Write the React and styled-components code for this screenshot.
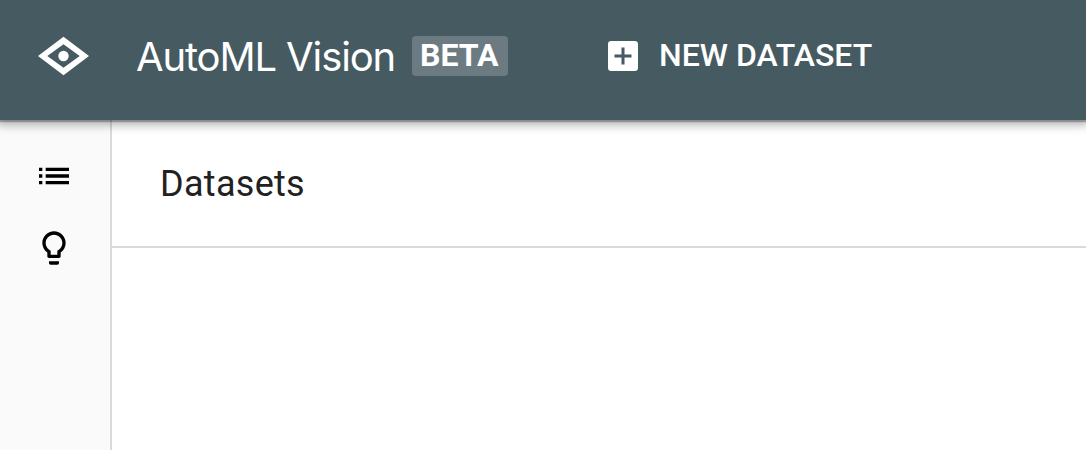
import React from 'react';
import styled, { createGlobalStyle } from 'styled-components';

const Global = createGlobalStyle`
  * { box-sizing: border-box; }
  body { margin: 0; background: #fff; font-family: Roboto, sans-serif; overflow: hidden; -webkit-font-smoothing: antialiased; }
`;
const Page = styled.div`
  height: 450px;
  display: flex;
  flex-direction: column;
`;
const Header = styled.header`
  height: 120px;
  flex: none;
  display: flex;
  align-items: flex-start;
  padding: 36px 0 0 38px;
  background: #465a62;
  color: #fff;
  box-shadow: 0 1px 1px 1px rgba(0, 0, 0, 0.26), 0 2px 9px 3px rgba(0, 0, 0, 0.3);
  position: relative;
  white-space: nowrap;
`;
const Logo = styled.svg`
  width: 51px;
  height: 40px;
  flex: none;
  margin-right: 47px;
`;
const Title = styled.h1`
  margin: 0;
  width: 276px;
  font: 400 40px/42px Inter, sans-serif;
  letter-spacing: -1.12px;
`;
const Badge = styled.span`
  width: 96px;
  height: 40px;
  padding-left: 8px;
  border-radius: 4px;
  background: #6b7b81;
  font: 700 32px/38px Roboto, sans-serif;
`;
const NewButton = styled.button`
  display: flex;
  align-items: center;
  gap: 21px;
  height: 40px;
  margin-left: 100px;
  padding: 0;
  border: 0;
  background: none;
  color: inherit;
  font: 500 32px/38px Roboto, sans-serif;
`;
const ButtonLabel = styled.span`
  padding-bottom: 2px;
`;
const Body = styled.div`
  flex: 1;
  display: flex;
`;
const Sidebar = styled.nav`
  width: 112px;
  border-right: 2px solid #dadada;
  background: #fafafa;
  display: flex;
  flex-direction: column;
  padding: 36px 0 0 34px;
  gap: 32px;
`;
const NavIcon = styled.svg`
  width: 40px;
  height: 40px;
  fill: #000;
`;
const Main = styled.main`
  flex: 1;
`;
const SectionHeader = styled.div`
  height: 128px;
  border-bottom: 2px solid #dadada;
  padding: 43px 0 0 48px;
`;
const Heading = styled.h2`
  margin: 0;
  color: #212121;
  font: 400 36px/42px Roboto, sans-serif;
  letter-spacing: 0.3px;
`;

export default function App() {
  return (
    <Page>
      <Global />
      <Header>
        <Logo viewBox="0 0 51 40" fill="#fff">
          <path fillRule="evenodd" d="M0 20 25.5.7 51 20 25.5 39.3ZM9.3 20 25.5 31.7 41.7 20 25.5 8.3Z" />
          <circle cx="25.5" cy="20" r="5.2" />
        </Logo>
        <Title>AutoML Vision</Title>
        <Badge>BETA</Badge>
        <NewButton>
          <svg width="30" height="30" viewBox="0 0 30 30">
            <rect width="30" height="30" rx="3.3" fill="#fff" />
            <path d="M15 6.5v17M6.5 15h17" stroke="#465a62" strokeWidth="3" />
          </svg>
          <ButtonLabel>NEW DATASET</ButtonLabel>
        </NewButton>
      </Header>
      <Body>
        <Sidebar>
          <NavIcon viewBox="0 0 24 24">
            <path d="M3 9h2V7H3v2zm0 4h2v-2H3v2zm0 4h2v-2H3v2zM7 7v2h14V7H7zm0 6h14v-2H7v2zm0 4h14v-2H7v2z" />
          </NavIcon>
          <NavIcon viewBox="0 0 24 24">
            <path d="M9 21c0 .55.45 1 1 1h4c.55 0 1-.45 1-1v-1H9v1zm3-19C8.14 2 5 5.14 5 9c0 2.38 1.19 4.47 3 5.74V17c0 .55.45 1 1 1h6c.55 0 1-.45 1-1v-2.26c1.81-1.27 3-3.36 3-5.74 0-3.86-3.14-7-7-7zm2.85 11.1l-.85.6V16h-4v-2.3l-.85-.6C7.8 12.16 7 10.63 7 9c0-2.76 2.24-5 5-5s5 2.24 5 5c0 1.63-.8 3.16-2.15 4.1z" />
          </NavIcon>
        </Sidebar>
        <Main>
          <SectionHeader><Heading>Datasets</Heading></SectionHeader>
        </Main>
      </Body>
    </Page>
  );
}
